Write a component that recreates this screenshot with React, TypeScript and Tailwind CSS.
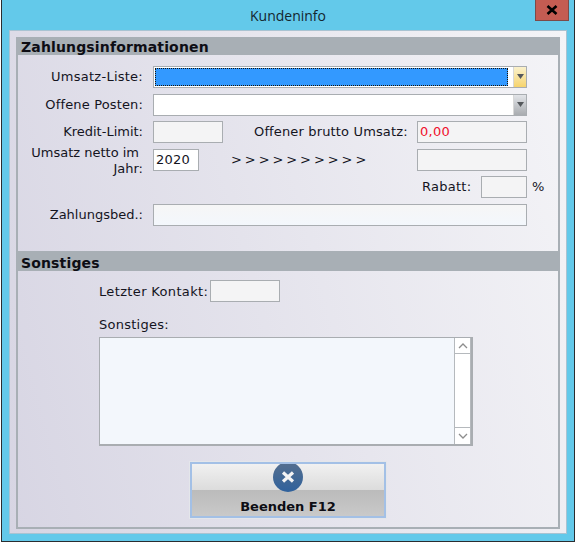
const labelFont = "font-['DejaVu_Sans',sans-serif] text-[13px] text-[#14141e]";

const Field = ({ className = '', children }: { className?: string; children?: React.ReactNode }) => (
  <div className={`h-[22px] shrink-0 border border-[#a9adb1] bg-[#f4f4f5] ${className}`}>{children}</div>
);

const Label = ({ className = '', children }: { className?: string; children: React.ReactNode }) => (
  <div className={`${labelFont} shrink-0 whitespace-nowrap ${className}`}>{children}</div>
);

const Arrow = () => (
  <svg width="7" height="5" viewBox="0 0 7 5" className="mt-[7px]">
    <path d="M0 0h7L3.5 5z" fill="#55585c" />
  </svg>
);

const Combo = ({ active }: { active?: boolean }) => (
  <div className="ml-[10px] flex h-[22px] w-[374px] border border-[#a9adb1] bg-white">
    <div className="flex-1 p-px">
      {active && <div className="h-[18px] w-[353px] border border-dotted border-[#1b1408] bg-[#3399ff]" />}
    </div>
    <div
      className={`flex w-[13px] justify-center border-l border-[#d8d8d8] ${
        active
          ? 'bg-gradient-to-b from-[#faf1cc] to-[#f6d46c]'
          : 'bg-gradient-to-b from-[#e2e4e8] to-[#a9acb0]'
      }`}
    >
      <Arrow />
    </div>
  </div>
);

const SectionHeader = ({ className = '', children }: { className?: string; children: React.ReactNode }) => (
  <div
    className={`-mx-[2px] bg-[#a8afb5] pl-[5px] font-['DejaVu_Sans',sans-serif] text-[14px] font-bold tracking-[0.15px] text-[#0d0d14] ${className}`}
  >
    {children}
  </div>
);

export default function App() {
  return (
    <div className="h-[544px] w-[576px] overflow-hidden bg-white pl-px">
      <div className="relative flex h-[542px] w-[574px] flex-col border-x border-b border-[#2a2d30] bg-[#63c9ea] px-[7px] pb-[7px]">
        {/* Title bar */}
        <div className="flex h-[30px] shrink-0 items-center justify-center font-['Open_Sans',sans-serif] text-[14px] text-[#14262e]">
          Kundeninfo
        </div>
        <div className="absolute right-[5px] top-0 flex h-[21px] w-[34px] items-center justify-center border-x border-b border-[#7d4a48] bg-[#c45c52]">
          <svg width="12" height="10" viewBox="0 0 12 10">
            <path d="M1.500 1l9 8M10.500 1l-9 8" stroke="#000" strokeWidth="2.600" />
          </svg>
        </div>

        {/* Client area */}
        <div className="flex-1 border border-[#a9c3d2] bg-[linear-gradient(75deg,#d7d5e3,#f4f4f7)] p-[6px] pb-[4px]">
          <div className="h-[492px] border-2 border-t-0 border-[#a8afb5]">
            <SectionHeader className="h-[18px] leading-[20px]">Zahlungsinformationen</SectionHeader>

            <div className="mt-[11px] flex h-[22px] items-center">
              <Label className="w-[125px] text-right tracking-[0.25px]">Umsatz-Liste:</Label>
              <Combo active />
            </div>
            <div className="mt-[6px] flex h-[22px] items-center">
              <Label className="w-[125px] text-right tracking-[0.15px]">Offene Posten:</Label>
              <Combo />
            </div>

            <div className="mt-[5px] flex h-[22px] items-center">
              <Label className="w-[125px] text-right">Kredit-Limit:</Label>
              <Field className="ml-[10px] w-[70px]" />
              <Label className="ml-[31px] w-[153px] tracking-[0.15px]">Offener brutto Umsatz:</Label>
              <Field className="ml-[10px] w-[110px] pl-[2px] font-['DejaVu_Sans',sans-serif] text-[13px] leading-[20px] tracking-[0.25px] text-[#f0102c]">
                0,00
              </Field>
            </div>

            <div className="mt-[6px] flex h-[22px] items-center">
              <Label className="mt-[2px] w-[125px] text-right leading-[16px]">
                <span className="pr-[4px]">Umsatz netto im</span>
                <br />
                Jahr:
              </Label>
              <Field className="ml-[10px] w-[46px] bg-white pl-[2px] font-['DejaVu_Sans',sans-serif] text-[13px] leading-[20px] tracking-[0.25px] text-[#14141e]">
                2020
              </Field>
              <Label className="ml-[32px] w-[186px] tracking-[-0.6px]">{'> > > > > > > > > >'}</Label>
              <Field className="w-[110px]" />
            </div>

            <div className="mt-[5px] flex h-[22px] items-center">
              <Label className="ml-[404px] w-[49px] tracking-[0.25px]">Rabatt:</Label>
              <Field className="ml-[10px] w-[46px]" />
              <Label className="ml-[5px]">%</Label>
            </div>

            <div className="mt-[6px] flex h-[22px] items-center">
              <Label className="w-[125px] text-right">Zahlungsbed.:</Label>
              <Field className="ml-[10px] w-[374px] bg-gradient-to-b from-[#f6f6f6] to-[#f3f7fc]" />
            </div>

            <SectionHeader className="mt-[25px] h-[20px] leading-[24px]">Sonstiges</SectionHeader>

            <div className="ml-[81px] mt-[9px] flex h-[22px] items-center">
              <Label className="mt-px w-[108px] tracking-[0.35px]">Letzter Kontakt:</Label>
              <Field className="ml-[3px] w-[70px]" />
            </div>

            <Label className="ml-[81px] mt-[15px] leading-[16px] tracking-[0.25px]">Sonstiges:</Label>

            <div className="ml-[81px] mt-[4px] flex h-[109px] w-[374px] border border-b-2 border-r-2 border-[#a9adb1] bg-[#f3f7fc]">
              <div className="flex-1" />
              <div className="flex w-[17px] flex-col justify-between border-x border-[#b5b9bd] bg-white">
                <div className="flex h-[16px] items-center justify-center border-b border-[#b5b9bd]">
                  <svg width="10" height="6" viewBox="0 0 10 6">
                    <path d="M1 5l4-4 4 4" fill="none" stroke="#8d8d8d" strokeWidth="1.300" />
                  </svg>
                </div>
                <div className="flex h-[17px] items-center justify-center border-t border-[#b5b9bd]">
                  <svg width="10" height="6" viewBox="0 0 10 6">
                    <path d="M1 1l4 4 4-4" fill="none" stroke="#8d8d8d" strokeWidth="1.300" />
                  </svg>
                </div>
              </div>
            </div>

            <button className="relative ml-[171px] mt-[15px] block h-[58px] w-[198px] border border-[#e4e6ea]">
              <div className="flex h-full flex-col overflow-hidden border-2 border-[#a3c0e6]">
                <div className="h-[26px] bg-gradient-to-b from-[#f1f1f1] to-[#dcdcdc]" />
                <div className="flex-1 bg-gradient-to-b from-[#bbbbbb] to-[#c9c9c9] pt-[9px] text-center font-['DejaVu_Sans',sans-serif] text-[13px] font-bold leading-[16px] text-[#0d0d14]">
                  Beenden F12
                </div>
                <div className="absolute left-[83px] top-[2px] h-[28px] w-[30px] overflow-hidden">
                  <svg width="30" height="28" viewBox="0 0 30 28">
                    <defs>
                      <linearGradient id="closeFill" x1="0" y1="0" x2="0" y2="1">
                        <stop offset="0" stopColor="#566f8e" />
                        <stop offset="1" stopColor="#2f619c" />
                      </linearGradient>
                    </defs>
                    <circle cx="15" cy="13" r="15" fill="url(#closeFill)" />
                    <path d="M10 8.500l10 9M20 8.500l-10 9" stroke="#f4f4f4" strokeWidth="3.200" />
                  </svg>
                </div>
              </div>
            </button>
          </div>
        </div>
      </div>
    </div>
  );
}
